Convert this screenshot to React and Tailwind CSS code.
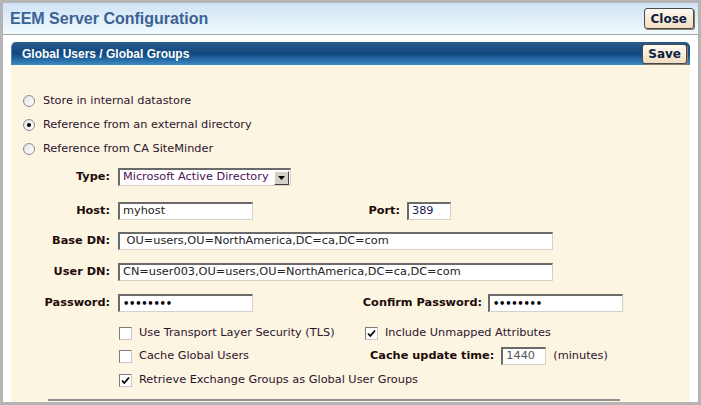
const body = { fontFamily: '"DejaVu Sans", Verdana, sans-serif' };
const arial = { fontFamily: '"Liberation Sans", Arial, sans-serif' };

function Btn({ children, wide }) {
  return (
    <button
      className={`${wide ? 'h-[21px] px-[6px]' : 'h-[20px] px-[5px]'} rounded-[3px] border border-[#4a4a4a] bg-gradient-to-b from-[#fffbf3] to-[#f1dcc0] text-[12px] font-bold leading-none text-[#0d1f3f] shadow-[1px_1px_0_#8a7a68]`}
      style={body}
    >
      {children}
    </button>
  );
}

function Radio({ checked, label }) {
  return (
    <div className="h-[24px] flex items-center">
      <span className="w-[12px] h-[12px] rounded-full border border-[#8e8e8e] bg-gradient-to-br from-[#e2e2e2] to-white flex items-center justify-center">
        {checked && <span className="w-[4px] h-[4px] rounded-full bg-black" />}
      </span>
      <span className="ml-[8px] text-[11.3px] text-[#2e132e]">{label}</span>
    </div>
  );
}

function Check({ checked, label }) {
  return (
    <div className="flex items-center">
      <span className="w-[13px] h-[13px] bg-white border border-[#7c7c7c] border-b-[#c8c8c8] border-r-[#c8c8c8] flex items-center justify-center">
        {checked && (
          <svg width="9" height="9" viewBox="0 0 9 9">
            <path d="M1 4.5 L3.3 7 L8 1.5" fill="none" stroke="#000" strokeWidth="1.8" />
          </svg>
        )}
      </span>
      <span className="ml-[7px] text-[11.3px] text-[#2e132e]">{label}</span>
    </div>
  );
}

function Field({ w, value, color = 'text-[#222]', pw }) {
  return (
    <div
      className={`h-[18px] ${w} bg-white border-t-2 border-l-2 border-b border-r border-t-[#6a6a6a] border-l-[#6a6a6a] border-b-[#d4d0c8] border-r-[#d4d0c8] flex items-center pl-[3px] overflow-hidden whitespace-nowrap ${
        pw ? 'text-[10px] font-bold tracking-[-0.3px] text-black' : `text-[11.3px] ${color}`
      }`}
    >
      {value}
    </div>
  );
}

function Label({ children, w }) {
  return <div className={`${w} text-right text-[11.3px] font-bold text-[#1f0b0b]`}>{children}</div>;
}

export default function App() {
  return (
    <div className="w-[701px] h-[405px] border-[3px] border-[#b4b4b4] bg-white flex flex-col overflow-hidden" style={body}>
      <div className="h-[32px] shrink-0 border-b border-[#a4a4a4] bg-gradient-to-b from-[#cfe2f4] to-[#f1fbff] flex items-center justify-between pl-[7px] pr-[4px]">
        <div className="text-[16px] font-bold text-[#3a6293] leading-none" style={arial}>
          EEM Server Configuration
        </div>
        <Btn wide>Close</Btn>
      </div>

      <div className="mt-[7px] mx-2 flex-1 flex flex-col">
        <div className="h-[23px] shrink-0 rounded-t-[5px] bg-gradient-to-b from-[#2b5b8c] via-[#0f4880] to-[#3d8bc4] flex items-center justify-between pl-[10px] pr-[3px] border-l border-[#5a84ad]">
          <div className="text-[12px] font-bold text-white" style={arial}>
            Global Users / Global Groups
          </div>
          <Btn>Save</Btn>
        </div>

        <div className="flex-1 bg-[#fcf5e1] pt-[24px]">
          <div className="pl-[12px]">
            <Radio label="Store in internal datastore" />
            <Radio checked label="Reference from an external directory" />
            <Radio label="Reference from CA SiteMinder" />
          </div>

          <div className="mt-[7px] h-[18px] flex items-center">
            <Label w="w-[99px]">Type:</Label>
            <div className="ml-[8px] w-[173px] h-[18px] bg-white border-t-2 border-l-2 border-b border-r border-t-[#6a6a6a] border-l-[#6a6a6a] border-b-[#d4d0c8] border-r-[#d4d0c8] flex items-center justify-between">
              <span className="pl-[3px] text-[11.3px] text-[#4d0f55] whitespace-nowrap">Microsoft Active Directory</span>
              <span className="w-[15px] h-[14px] mr-[1px] shrink-0 bg-[#d4d0c8] border border-t-white border-l-white border-b-[#404040] border-r-[#404040] flex items-center justify-center">
                <svg width="7" height="4" viewBox="0 0 7 4">
                  <path d="M0 0 H7 L3.5 4 Z" fill="#000" />
                </svg>
              </span>
            </div>
          </div>

          <div className="mt-[16px] h-[18px] flex items-center">
            <Label w="w-[99px]">Host:</Label>
            <div className="ml-[8px]">
              <Field w="w-[135px]" value="myhost" />
            </div>
            <Label w="w-[147px]">Port:</Label>
            <div className="ml-[7px]">
              <Field w="w-[44px]" value="389" color="text-[#1c1650]" />
            </div>
          </div>

          <div className="mt-[12px] h-[18px] flex items-center">
            <Label w="w-[99px]">Base DN:</Label>
            <div className="ml-[8px]">
              <Field w="w-[435px]" value={'\u00a0OU=users,OU=NorthAmerica,DC=ca,DC=com'} />
            </div>
          </div>

          <div className="mt-[13px] h-[18px] flex items-center">
            <Label w="w-[99px]">User DN:</Label>
            <div className="ml-[8px]">
              <Field w="w-[435px]" value="CN=user003,OU=users,OU=NorthAmerica,DC=ca,DC=com" />
            </div>
          </div>

          <div className="mt-[13px] h-[18px] flex items-center">
            <Label w="w-[99px]">Password:</Label>
            <div className="ml-[8px]">
              <Field w="w-[135px]" value="••••••••" pw />
            </div>
            <Label w="w-[229px]">Confirm Password:</Label>
            <div className="ml-[6px]">
              <Field w="w-[135px]" value="••••••••" pw />
            </div>
          </div>

          <div className="mt-[12px] h-[18px] flex items-center pl-[108px]">
            <div className="w-[246px]">
              <Check label="Use Transport Layer Security (TLS)" />
            </div>
            <Check checked label="Include Unmapped Attributes" />
          </div>

          <div className="mt-[5px] h-[18px] flex items-center pl-[108px]">
            <div className="w-[246px]">
              <Check label="Cache Global Users" />
            </div>
            <div className="ml-[5px] text-[11.3px] font-bold text-[#1f0b0b]">Cache update time:</div>
            <div className="ml-[7px]">
              <Field w="w-[45px]" value="1440" color="text-[#555]" />
            </div>
            <span className="ml-[7px] text-[11.3px] text-[#2e132e]">(minutes)</span>
          </div>

          <div className="mt-[6px] h-[18px] flex items-center pl-[108px]">
            <Check checked label="Retrieve Exchange Groups as Global User Groups" />
          </div>

          <div className="mt-[10px] ml-[37px] w-[572px] h-[2px] bg-[#8e8e8e]" />
        </div>
      </div>
    </div>
  );
}
